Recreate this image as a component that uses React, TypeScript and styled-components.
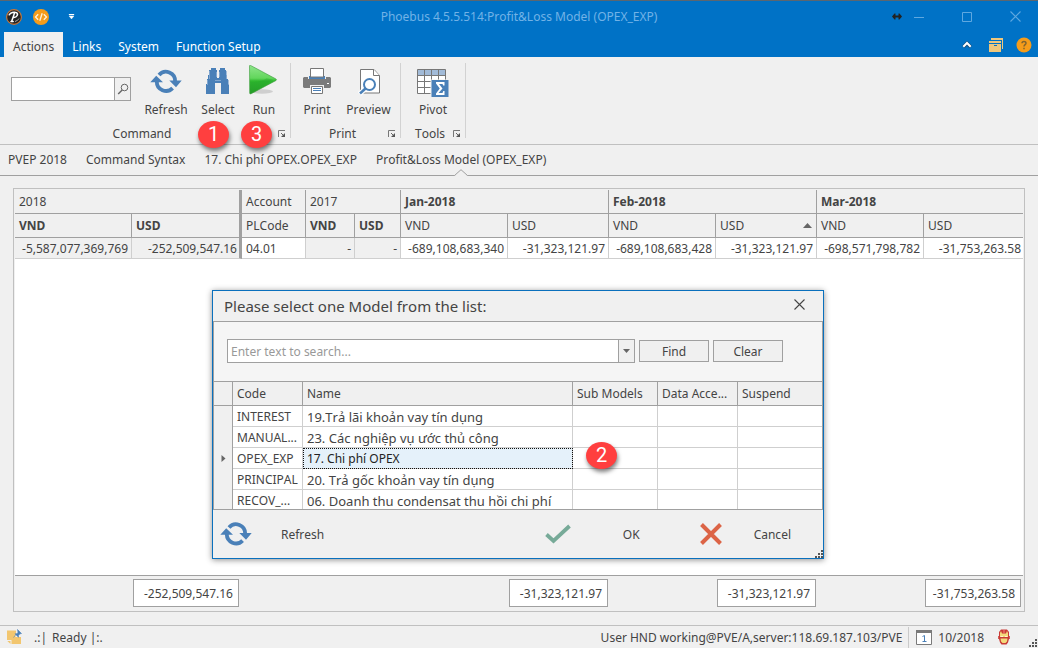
import React, { useState } from 'react';
import styled, { createGlobalStyle, css } from 'styled-components';

const blue = '#0072c6';
const surface = '#f0f0f0';
const line = '#a0a0a0';
const softLine = '#c0c0c0';
const cellLine = '#cfcfcf';
const ink = '#444444';
const steel = '#4a80b8';

const GlobalStyle = createGlobalStyle`
  *, *::before, *::after { box-sizing: border-box; }
  body {
    margin: 0;
    background: ${surface};
    color: ${ink};
    font: 12px/16px 'Noto Sans', 'Open Sans', sans-serif;
    font-kerning: none;
  }
  button, input { font: inherit; font-kerning: none; color: inherit; }
  button { margin: 0; padding: 0; border: 0; background: none; border-radius: 0; }
  svg { display: block; }
`;

const Window = styled.div`
  position: relative;
  display: flex;
  flex-direction: column;
  min-height: 100vh;
`;

/* ---------- title bar and ribbon tabs ---------- */

const TitleBar = styled.header`
  display: grid;
  grid-template-columns: 1fr auto 1fr;
  align-items: center;
  height: 32px;
  border-top: 1px solid #5c6670;
  background: ${blue};
`;

const QuickAccess = styled.div`
  display: flex;
  align-items: center;
  gap: 11px;
  padding-left: 6px;
`;

const Title = styled.h1`
  margin: 0;
  font-size: 12px;
  font-weight: 400;
  color: #72b2e6;
`;

const WindowControls = styled.div`
  display: flex;
  justify-content: flex-end;
  align-items: center;
  padding-right: 17px;
`;

const ControlButton = styled.button<{ $gap?: number }>`
  margin-left: ${(p) => p.$gap ?? 0}px;
`;

const TabBar = styled.nav`
  display: flex;
  align-items: stretch;
  gap: 1px;
  height: 25px;
  padding: 0 6px 0 4px;
  background: ${blue};
`;

const RibbonTab = styled.button<{ $active?: boolean }>`
  padding: 4px 8px 0;
  color: #fff;
  ${(p) => p.$active && css`
    padding: 4px 9px 0;
    background: ${surface};
    color: ${ink};
  `}
`;

const TabTools = styled.div`
  display: flex;
  align-items: center;
  gap: 13px;
  margin-left: auto;
  padding-top: 1px;
`;

const CollapseButton = styled.button`
  margin-right: 4px;
`;

/* ---------- ribbon ---------- */

const Ribbon = styled.section`
  display: flex;
  height: 88px;
  padding-top: 6px;
  border-bottom: 1px solid ${softLine};
`;

const Group = styled.div`
  display: flex;
  flex-direction: column;
`;

const GroupItems = styled.div`
  display: flex;
  align-items: flex-start;
  height: 63px;
`;

const GroupFooter = styled.div`
  display: flex;
  align-items: center;
  padding: 0 4px 0 6px;
`;

const GroupLabel = styled.span`
  flex: 1;
  text-align: center;
`;

const Separator = styled.div`
  width: 1px;
  height: 75px;
  background: #d2d2d2;
`;

const RibbonButton = styled.button<{ $width: number; $before?: number; $after?: number }>`
  display: flex;
  flex-direction: column;
  align-items: center;
  gap: 4px;
  width: ${(p) => p.$width}px;
  margin: 0 ${(p) => p.$after ?? 0}px 0 ${(p) => p.$before ?? 0}px;
  padding-top: 2px;
  white-space: nowrap;

  svg { height: 33px; }
`;

const CommandSearch = styled.div`
  display: flex;
  width: 120px;
  height: 24px;
  margin: 14px 9px 0 11px;
  border: 1px solid ${line};
  background: #fff;
`;

const BareInput = styled.input`
  flex: 1;
  min-width: 0;
  padding: 1px 3px 0;
  border: 0;
  outline: 0;
  background: transparent;

  &::placeholder { color: #999; opacity: 1; }
`;

const InputButton = styled.button`
  display: grid;
  place-items: center;
  width: 16px;
  border-left: 1px solid ${line};
  background: ${surface};
`;

/* ---------- document tabs ---------- */

const DocTabs = styled.nav`
  display: flex;
  gap: 19px;
  height: 31px;
  padding: 0 8px;
  border-bottom: 1px solid ${line};
`;

const DocTab = styled.button`
  position: relative;
  white-space: nowrap;
  padding-bottom: 1px;
`;

const Notch = styled.svg`
  position: absolute;
  left: 50%;
  bottom: -1px;
  margin-left: -7px;
`;

/* ---------- pivot grid ---------- */

const Workspace = styled.main`
  flex: 1;
  display: flex;
  padding: 12px 13px 13px;
`;

const PivotPanel = styled.div`
  flex: 1;
  min-width: 0;
  display: flex;
  flex-direction: column;
  padding: 1px 1px 0;
  border: 1px solid ${softLine};
`;

const PivotTable = styled.table`
  width: 100%;
  table-layout: fixed;
  border-collapse: separate;
  border-spacing: 0;
  background: #fff;
`;

const HeadCell = styled.th<{ $bold?: boolean; $thick?: boolean; $last?: boolean }>`
  height: 24px;
  padding: 0 4px;
  border-bottom: 1px solid ${line};
  border-right: ${(p) => (p.$last ? 0 : p.$thick ? 3 : 1)}px solid ${line};
  background: ${surface};
  font-weight: ${(p) => (p.$bold ? 700 : 400)};
  text-align: left;
  white-space: nowrap;
`;

const HeadContent = styled.span`
  display: flex;
  align-items: center;
  justify-content: space-between;
`;

const DataCell = styled.td<{ $frozen?: boolean; $thick?: boolean; $left?: boolean; $last?: boolean }>`
  height: 21px;
  padding: 2px ${(p) => (p.$thick || p.$last ? 2 : 3)}px 0 4px;
  border-bottom: 1px solid ${cellLine};
  border-right: ${(p) => (p.$last ? '0' : p.$thick ? `3px solid ${line}` : `1px solid ${cellLine}`)};
  background: ${(p) => (p.$frozen ? surface : '#fff')};
  text-align: ${(p) => (p.$left ? 'left' : 'right')};
  white-space: nowrap;
`;

const PivotBody = styled.div`
  flex: 1;
  min-height: 240px;
  background: #fff;
`;

const Totals = styled.div`
  display: grid;
  grid-template-columns: 117px 107px 269px 100px 108px 100px 108px 1fr;
  height: 36px;
  padding-top: 3px;
  border-top: 1px solid ${line};
`;

const Total = styled.output<{ $column: number; $inset?: boolean }>`
  grid-column: ${(p) => p.$column};
  height: 28px;
  margin: 0 ${(p) => (p.$inset ? 2 : 0)}px 0 1px;
  padding: 6px 5px 0 0;
  border: 1px solid ${line};
  background: #fff;
  text-align: right;
`;

/* ---------- status bar ---------- */

const StatusBar = styled.footer`
  display: flex;
  align-items: center;
  height: 23px;
  padding-left: 7px;
  border-top: 1px solid ${softLine};
`;

const StatusText = styled.span<{ $gap?: number }>`
  margin-left: ${(p) => p.$gap ?? 0}px;
  padding-top: 2px;
  white-space: pre;
`;

const StatusEnd = styled.div`
  display: flex;
  align-items: center;
  gap: 6px;
  margin-left: auto;
`;

const StatusSeparator = styled.div`
  width: 1px;
  height: 21px;
  margin-right: 1px;
  background: #cacaca;
`;

const StatusButton = styled.button`
  margin-left: 14px;
`;

const GripCorner = styled.div`
  align-self: flex-end;
  padding: 0 1px 1px 19px;
`;

/* ---------- dialog ---------- */

const Dialog = styled.section`
  position: absolute;
  top: 290px;
  left: calc(50% - 307px);
  width: 612px;
  border: 1px solid #0a70bd;
  background: ${surface};
  box-shadow: 0 1px 6px rgba(0, 0, 0, 0.45);
`;

const DialogHeader = styled.div`
  display: flex;
  align-items: center;
  justify-content: space-between;
  height: 30px;
  padding: 0 18px 0 11px;
`;

const DialogTitle = styled.h2`
  margin: 0;
  font-size: 15px;
  line-height: 20px;
  font-weight: 400;
`;

const DialogClose = styled.button`
  margin-bottom: 3px;
`;

const DialogBody = styled.div`
  border: 1px solid ${line};
`;

const SearchRow = styled.div`
  display: flex;
  align-items: center;
  gap: 4px;
  height: 59px;
  padding: 0 39px 1px 13px;
  background: #f5f5f5;
`;

const SearchBox = styled.div`
  display: flex;
  flex: 1;
  height: 24px;
  border: 1px solid ${line};
  background: #fff;
`;

const PushButton = styled.button`
  width: 70px;
  height: 22px;
  padding-top: 1px;
  border: 1px solid ${line};
  background: ${surface};
`;

const ListClip = styled.div`
  height: 128px;
  overflow: hidden;
  border-top: 1px solid ${line};
`;

const ListTable = styled.table`
  width: 100%;
  table-layout: fixed;
  border-collapse: separate;
  border-spacing: 0;
  background: #fff;
`;

const ListHead = styled.th`
  height: 24px;
  padding: 0 4px;
  border-bottom: 1px solid ${line};
  border-right: 1px solid ${line};
  background: ${surface};
  font-weight: 400;
  text-align: left;
  white-space: nowrap;
  overflow: hidden;

  &:last-child { border-right: 0; }
`;

const ListCell = styled.td<{ $name?: boolean; $selected?: boolean }>`
  height: 21px;
  padding: 2px 0 0 4px;
  border-bottom: 1px solid ${cellLine};
  border-right: 1px solid ${cellLine};
  white-space: nowrap;
  overflow: hidden;
  ${(p) => p.$name && css`font-size: 13px;`}
  ${(p) => p.$selected && css`
    background: #e5f1fa;
    color: #222;
    font-size: 12px;
    outline: 1px dotted #111;
    outline-offset: -1px;
  `}

  &:last-child { border-right: 0; }
`;

const Indicator = styled.td`
  padding-left: 7px;
  border-right: 1px solid ${line};
  background: ${surface};
`;

const DialogFooter = styled.div`
  display: flex;
  align-items: center;
  height: 48px;
  padding: 0 32px 0 7px;
`;

const DialogAction = styled.button<{ $gap: number; $before?: string }>`
  display: flex;
  align-items: center;
  gap: ${(p) => p.$gap}px;
  margin-left: ${(p) => p.$before ?? 0};
`;

const ActionLabel = styled.span`
  padding-top: 1px;
`;

const DialogGrip = styled.div`
  position: absolute;
  right: 0;
  bottom: 0;
`;

/* ---------- numbered step markers ---------- */

const Step = styled.span<{ $x: string; $y: number }>`
  position: absolute;
  left: ${(p) => p.$x};
  top: ${(p) => p.$y}px;
  width: 31px;
  height: 27px;
  border-radius: 50%;
  background: #ff3f3f;
  box-shadow: 1px 3px 4px rgba(0, 0, 0, 0.5);
  color: #fff;
  font: 20px/27px Roboto, sans-serif;
  text-align: center;
`;

/* ---------- icons ---------- */

const LogoIcon = () => (
  <svg width="16" height="16" viewBox="0 0 16 16">
    <circle cx="8" cy="8" r="7.4" fill="#252525" stroke="#c8783c" strokeWidth="1.1" />
    <path d="M3.2 5.8C4.5 3.5 8 2.6 10.4 3.6C12.6 5 11.2 8.3 7.6 8.6M8.6 3.8L5.6 12.6M5 12.6h2.2" fill="none" stroke="#fff" strokeWidth="1.5" strokeLinecap="round" />
    <path d="M9 12.5q3-.8 4-3" fill="none" stroke="#aaa" strokeWidth="1" />
  </svg>
);

const CodeIcon = () => (
  <svg width="16" height="16" viewBox="0 0 16 16">
    <circle cx="8" cy="8" r="8" fill="#f59c1a" />
    <path d="M5.2 5.2L2.5 8l2.7 2.8M10.8 5.2L13.5 8l-2.7 2.8M9.2 4.2L6.8 11.8" fill="none" stroke="#fff3dc" strokeWidth="1.3" />
  </svg>
);

const QuickMenuIcon = () => (
  <svg width="7" height="6" viewBox="0 0 7 6">
    <path d="M1 0h5v1H1zM1 2h5L3.5 5z" fill="#fff" stroke="#fff" strokeWidth=".3" />
  </svg>
);

const ResizeIcon = () => (
  <svg width="10" height="7" viewBox="0 0 10 7">
    <path d="M0 3.5L2.5.5h1v2h3v-2h1L10 3.5 7.500 6.500h-1v-2h-3v2h-1z" fill="#222" />
  </svg>
);

const MinimizeIcon = () => (
  <svg width="10" height="10" viewBox="0 0 10 10"><path d="M0 5.5h10" stroke="#5fa8e0" /></svg>
);

const MaximizeIcon = () => (
  <svg width="10" height="10" viewBox="0 0 10 10"><path d="M.5.5h9v9h-9z" fill="none" stroke="#5fa8e0" /></svg>
);

const CloseIcon = ({ color }: { color: string }) => (
  <svg width="11" height="11" viewBox="0 0 11 11"><path d="M.5.5l10 10M10.5.5l-10 10" stroke={color} strokeWidth="1.1" /></svg>
);

const CollapseIcon = () => (
  <svg width="10" height="8" viewBox="0 0 10 8">
    <path d="M1.3 6L5 2.3 8.7 6" fill="none" stroke="#174d79" strokeWidth="3.6" />
    <path d="M1.3 5.7L5 2 8.7 5.7" fill="none" stroke="#fff" strokeWidth="2" />
  </svg>
);

const ArchiveIcon = () => (
  <svg width="14" height="14" viewBox="0 0 14 14">
    <path d="M2 0h12v11h-1V2H2zM0 3h12v2H0zM0 6h12v8H0z" fill="#efc77c" />
    <path d="M5 7.5h3" stroke={blue} />
  </svg>
);

const HelpIcon = () => (
  <svg width="16" height="16" viewBox="0 0 16 16">
    <circle cx="8" cy="8" r="7.5" fill="#f59c1a" />
    <path d="M6 6.3C6 3.7 10 3.8 10 6.2C10 7.7 8 7.6 8 9.6M8 10.8v1.5" fill="none" stroke="#80642f" strokeWidth="1.5" />
  </svg>
);

const MagnifierIcon = () => (
  <svg width="12" height="12" viewBox="0 0 12 12">
    <circle cx="7.5" cy="4.5" r="3.3" fill="none" stroke="#666" />
    <path d="M5.2 6.9L1.2 10.9" stroke="#666" strokeWidth="1.4" />
  </svg>
);

const RefreshIcon = () => (
  <svg width="32" height="24" viewBox="0 0 32 24">
    <g fill="none" stroke={steel} strokeWidth="3.8">
      <path d="M9 5.4A9.2 9.2 0 0 1 25.1 12" />
      <path d="M6.8 12A9.2 9.2 0 0 0 22.6 18.6" />
    </g>
    <path d="M.3 12.8L6.2 6.2L13 12.8zM19.3 11L31.7 11L26 17.7z" fill={steel} />
  </svg>
);

const BinocularsIcon = () => (
  <svg width="26" height="33" viewBox="0 0 26 33">
    <path d="M6 3h5v2h1v8h2V5h1V3h5v2h1v5h1v4h1v5h1v10H16V18h-6v11H1V19h1v-5h1v-4h1V5h2z" fill={steel} />
    <path d="M4.5 6v8M21.5 6v8M2.5 15v5M23.5 15v5M11.5 7v5M14.5 7v5M10 15.5h6" stroke="#8fb0d4" strokeWidth=".8" />
    <path d="M12.5 3v10h1V3z" fill={surface} />
  </svg>
);

const RunIcon = () => (
  <svg width="32" height="33" viewBox="0 0 32 33">
    <defs>
      <linearGradient id="runFill" x1="0" y1="0" x2="0" y2="1">
        <stop offset="0" stopColor="#8fe58a" />
        <stop offset=".45" stopColor="#62d65c" />
        <stop offset=".55" stopColor="#2fb82e" />
        <stop offset="1" stopColor="#259b28" />
      </linearGradient>
    </defs>
    <ellipse cx="14" cy="26.5" rx="11" ry="2.2" fill="#cfcfcf" />
    <path d="M1.5 1q0-1.2 1-.6L28 14q1 .8 0 1.5L3 28.8q-1.3.6-1.3-.8z" fill="url(#runFill)" stroke="#3a9a3a" strokeWidth=".6" />
    <path d="M2.5 17q9 .8 16-3.8l6.5 1.6L3.1 27z" fill="#25a62a" opacity=".35" />
  </svg>
);

const PrinterIcon = () => (
  <svg width="28" height="33" viewBox="0 0 28 33">
    <path d="M1 12h26l1 1v9l-1 1H1l-1-1v-9z" fill="#7b7b7b" />
    <path d="M5 11h18v3H5z" fill={surface} />
    <path d="M6 11h16v3H6z" fill={steel} />
    <path d="M7.5 3.5h13v8.5h-13z" fill="#fff" stroke="#777" />
    <path d="M7 20h14v9H7z" fill={surface} />
    <path d="M8.5 21.5h11v7h-11z" fill="#fff" stroke="#777" />
    <path d="M10 23.5h8M10 25.5h8" stroke={steel} />
    <path d="M24 18.5h2" stroke="#fff" />
  </svg>
);

const PreviewIcon = () => (
  <svg width="24" height="33" viewBox="0 0 24 33">
    <path d="M3.5 4.5H17l5.5 6v17.5h-19z" fill="#fff" stroke="#777" />
    <path d="M16.5 4.5v6h6" fill="#fff" stroke="#777" />
    <circle cx="12.5" cy="19.5" r="7" fill="#fff" />
    <path d="M8.5 23.5L2.5 29" stroke="#fff" strokeWidth="5" />
    <circle cx="12.5" cy="19.5" r="5.5" fill="#fff" stroke={steel} strokeWidth="2" />
    <path d="M8.5 23.5L3 28.5" stroke={steel} strokeWidth="2.5" />
  </svg>
);

const PivotIcon = () => (
  <svg width="32" height="33" viewBox="0 0 32 33">
    <path d="M.5 4.5h28v24H.5z" fill="#fff" />
    <path d="M.5 4.5h28v6H.5z" fill="#a2bbd8" />
    <path d="M.5 4.5h28v24H.5zM7.5 4.5v24M14.5 4.5v24M21.5 4.5v24M.5 10.5h28M.5 16.5h28M.5 22.5h28" fill="none" stroke="#777" />
    <path d="M13.5 14.5H32V33H13.5z" fill={surface} />
    <path d="M14.5 15H31.5V32H14.5z" fill={steel} />
    <path d="M19 17h8.5v3.5h-1.3l-.7-1.5h-3.5l3.5 4.5-4 4.5h4l.8-2h1.2v4H19v-1.6l3.8-4.9L19 18.6z" fill="#fff" />
  </svg>
);

const LauncherIcon = () => (
  <svg width="8" height="8" viewBox="0 0 8 8">
    <path d="M.5 7V.5H7" fill="none" stroke="#777" />
    <path d="M3 3l3 3" stroke="#666" />
    <path d="M7 3v4H3z" fill="#555" />
  </svg>
);

const DownIcon = () => (
  <svg width="7" height="4" viewBox="0 0 7 4"><path d="M0 0h7L3.5 4z" fill="#666" /></svg>
);

const SortIcon = () => (
  <svg width="9" height="5" viewBox="0 0 9 5"><path d="M0 5h9L4.5 0z" fill="#666" /></svg>
);

const RowArrowIcon = () => (
  <svg width="5" height="7" viewBox="0 0 5 7"><path d="M.5 0v7L4.5 3.5z" fill="#666" /></svg>
);

const CheckIcon = () => (
  <svg width="28" height="22" viewBox="0 0 28 22">
    <path d="M2.5 11.5L9.5 18L25.5 3" fill="none" stroke="#77aa98" strokeWidth="3.8" />
  </svg>
);

const CrossIcon = () => (
  <svg width="22" height="22" viewBox="0 0 22 22">
    <path d="M1.5 1.5L20.5 20.5M20.5 1.5L1.5 20.5" stroke="#dc6446" strokeWidth="4" />
  </svg>
);

const GripIcon = () => (
  <svg width="8" height="8" viewBox="0 0 8 8">
    <path d="M6 0h2v2H6zM3 3h2v2H3zM6 3h2v2H6zM0 6h2v2H0zM3 6h2v2H3zM6 6h2v2H6z" fill="#555" />
  </svg>
);

const NoteIcon = () => (
  <svg width="15" height="16" viewBox="0 0 15 16">
    <path d="M0 1.5h9v4l-1 1.5 1 1h5V15H4.5v-4H0z" fill="#f2c66f" />
    <path d="M.3 12h3.2v3z" fill="#f2c66f" />
    <path d="M10.5 .5l4 4-1.5.3-1.5 1.5v2l-3.5-3.5h2l1-1.5zM9 5.5L6.5 8.5" fill={steel} stroke={steel} strokeWidth=".6" />
  </svg>
);

const CalendarIcon = () => (
  <svg width="16" height="15" viewBox="0 0 16 15">
    <path d="M.5.5h15v14H.5z" fill="#fff" stroke="#7a7a7a" />
    <path d="M0 0h16v3H0z" fill="#7a7a7a" />
    <path d="M6.5 6.5L8.5 5.5V11.5M6.5 11.5h4" fill="none" stroke={steel} />
  </svg>
);

const MaskIcon = () => (
  <svg width="12" height="16" viewBox="0 0 12 16">
    <path d="M3 .5h6L11 3v4h.8v3H11l-1 3.5L8.5 15.5h-5L2 13.5 1 10H.2V7H1V3z" fill="#c93b36" />
    <path d="M3 2l1 2.5h4L9 2l1 2v4H2V4zM2.5 9.5h7l-.5 3-1.5 1.5h-3L3 12.5z" fill="#f3da7c" />
    <path d="M2.5 7.5h2.5M7 7.5h2.5" stroke="#fff7d0" />
    <path d="M5 1h2v3H5z" fill="#e0605a" />
  </svg>
);

/* ---------- data ---------- */

const pivotColumns = [117, 110, 64, 49, 46, 107, 101, 107, 101, 107];

const docTabs = ['PVEP 2018', 'Command Syntax', '17. Chi phí OPEX.OPEX_EXP', 'Profit&Loss Model (OPEX_EXP)'];

const months = ['Jan-2018', 'Feb-2018', 'Mar-2018'];

const monthValues = [
  '-689,108,683,340', '-31,323,121.97',
  '-689,108,683,428', '-31,323,121.97',
  '-698,571,798,782', '-31,753,263.58',
];

const models = [
  { code: 'INTEREST', name: '19.Trả lãi khoản vay tín dụng' },
  { code: 'MANUAL...', name: '23. Các nghiệp vụ ước thủ công' },
  { code: 'OPEX_EXP', name: '17. Chi phí OPEX' },
  { code: 'PRINCIPAL', name: '20. Trả gốc khoản vay tín dụng' },
  { code: 'RECOV_...', name: '06. Doanh thu condensat thu hồi chi phí' },
];

/* ---------- sections ---------- */

const RibbonBar = () => (
  <Ribbon>
    <Group>
      <GroupItems>
        <CommandSearch>
          <BareInput aria-label="Search commands" />
          <InputButton aria-label="Search"><MagnifierIcon /></InputButton>
        </CommandSearch>
        <RibbonButton $width={52}><RefreshIcon />Refresh</RibbonButton>
        <RibbonButton $width={52}><BinocularsIcon />Select</RibbonButton>
        <RibbonButton $width={40} $after={6}><RunIcon />Run</RibbonButton>
      </GroupItems>
      <GroupFooter>
        <GroupLabel>Command</GroupLabel>
        <button aria-label="Command options"><LauncherIcon /></button>
      </GroupFooter>
    </Group>
    <Separator />
    <Group>
      <GroupItems>
        <RibbonButton $width={40} $before={6}><PrinterIcon />Print</RibbonButton>
        <RibbonButton $width={63}><PreviewIcon />Preview</RibbonButton>
      </GroupItems>
      <GroupFooter>
        <GroupLabel>Print</GroupLabel>
        <button aria-label="Print options"><LauncherIcon /></button>
      </GroupFooter>
    </Group>
    <Separator />
    <Group>
      <GroupItems>
        <RibbonButton $width={64}><PivotIcon />Pivot</RibbonButton>
      </GroupItems>
      <GroupFooter>
        <GroupLabel>Tools</GroupLabel>
        <button aria-label="Tools options"><LauncherIcon /></button>
      </GroupFooter>
    </Group>
    <Separator />
  </Ribbon>
);

const PivotGrid = () => (
  <PivotPanel>
    <PivotTable>
      <colgroup>
        {pivotColumns.map((width, i) => <col key={i} width={width} />)}
        <col />
      </colgroup>
      <thead>
        <tr>
          <HeadCell colSpan={2} $thick>2018</HeadCell>
          <HeadCell>Account</HeadCell>
          <HeadCell colSpan={2}>2017</HeadCell>
          {months.map((month, i) => (
            <HeadCell key={month} colSpan={2} $bold $last={i === 2}>{month}</HeadCell>
          ))}
        </tr>
        <tr>
          <HeadCell $bold>VND</HeadCell>
          <HeadCell $bold $thick>USD</HeadCell>
          <HeadCell>PLCode</HeadCell>
          <HeadCell $bold>VND</HeadCell>
          <HeadCell $bold>USD</HeadCell>
          {months.map((month, i) => (
            <React.Fragment key={month}>
              <HeadCell>VND</HeadCell>
              <HeadCell $last={i === 2}>
                <HeadContent>USD{i === 1 && <SortIcon />}</HeadContent>
              </HeadCell>
            </React.Fragment>
          ))}
        </tr>
      </thead>
      <tbody>
        <tr>
          <DataCell $frozen>-5,587,077,369,769</DataCell>
          <DataCell $frozen $thick>-252,509,547.16</DataCell>
          <DataCell $left>04.01</DataCell>
          <DataCell $frozen>-</DataCell>
          <DataCell $frozen>-</DataCell>
          {monthValues.map((value, i) => (
            <DataCell key={i} $last={i === 5}>{value}</DataCell>
          ))}
        </tr>
      </tbody>
    </PivotTable>
    <PivotBody />
    <Totals>
      <Total $column={2}>-252,509,547.16</Total>
      <Total $column={4}>-31,323,121.97</Total>
      <Total $column={6}>-31,323,121.97</Total>
      <Total $column={8} $inset>-31,753,263.58</Total>
    </Totals>
  </PivotPanel>
);

const ModelDialog = () => {
  const [query, setQuery] = useState('');
  return (
    <Dialog role="dialog" aria-labelledby="model-dialog-title">
      <DialogHeader>
        <DialogTitle id="model-dialog-title">Please select one Model from the list:</DialogTitle>
        <DialogClose aria-label="Close dialog"><CloseIcon color="#444" /></DialogClose>
      </DialogHeader>
      <DialogBody>
        <SearchRow>
          <SearchBox>
            <BareInput
              aria-label="Search models"
              placeholder="Enter text to search..."
              value={query}
              onChange={(e) => setQuery(e.target.value)}
            />
            <InputButton aria-label="Recent searches"><DownIcon /></InputButton>
          </SearchBox>
          <PushButton>Find</PushButton>
          <PushButton onClick={() => setQuery('')}>Clear</PushButton>
        </SearchRow>
        <ListClip>
          <ListTable>
            <colgroup>
              <col width={19} /><col width={70} /><col width={270} />
              <col width={85} /><col width={80} /><col />
            </colgroup>
            <thead>
              <tr>
                <ListHead />
                <ListHead>Code</ListHead>
                <ListHead>Name</ListHead>
                <ListHead>Sub Models</ListHead>
                <ListHead>Data Acce...</ListHead>
                <ListHead>Suspend</ListHead>
              </tr>
            </thead>
            <tbody>
              {models.map(({ code, name }) => {
                const selected = code === 'OPEX_EXP';
                return (
                  <tr key={code}>
                    <Indicator>{selected && <RowArrowIcon />}</Indicator>
                    <ListCell>{code}</ListCell>
                    <ListCell $name $selected={selected}>{name}</ListCell>
                    <ListCell />
                    <ListCell />
                    <ListCell />
                  </tr>
                );
              })}
            </tbody>
          </ListTable>
        </ListClip>
      </DialogBody>
      <DialogFooter>
        <DialogAction $gap={29}><RefreshIcon /><ActionLabel>Refresh</ActionLabel></DialogAction>
        <DialogAction $gap={51} $before="auto"><CheckIcon /><ActionLabel>OK</ActionLabel></DialogAction>
        <DialogAction $gap={32} $before="60px"><CrossIcon /><ActionLabel>Cancel</ActionLabel></DialogAction>
      </DialogFooter>
      <DialogGrip><GripIcon /></DialogGrip>
    </Dialog>
  );
};

export default function App() {
  return (
    <Window>
      <GlobalStyle />
      <TitleBar>
        <QuickAccess>
          <LogoIcon />
          <button aria-label="Code"><CodeIcon /></button>
          <ControlButton $gap={8} aria-label="Customize quick access"><QuickMenuIcon /></ControlButton>
        </QuickAccess>
        <Title>Phoebus 4.5.5.514:Profit&amp;Loss Model (OPEX_EXP)</Title>
        <WindowControls>
          <ControlButton aria-label="Resize"><ResizeIcon /></ControlButton>
          <ControlButton $gap={12} aria-label="Minimize"><MinimizeIcon /></ControlButton>
          <ControlButton $gap={38} aria-label="Maximize"><MaximizeIcon /></ControlButton>
          <ControlButton $gap={38} aria-label="Close"><CloseIcon color="#5fa8e0" /></ControlButton>
        </WindowControls>
      </TitleBar>
      <TabBar>
        <RibbonTab $active>Actions</RibbonTab>
        <RibbonTab>Links</RibbonTab>
        <RibbonTab>System</RibbonTab>
        <RibbonTab>Function Setup</RibbonTab>
        <TabTools>
          <CollapseButton aria-label="Collapse ribbon"><CollapseIcon /></CollapseButton>
          <button aria-label="Windows"><ArchiveIcon /></button>
          <button aria-label="Help"><HelpIcon /></button>
        </TabTools>
      </TabBar>
      <RibbonBar />
      <DocTabs>
        {docTabs.map((label, i) => (
          <DocTab key={label}>
            {label}
            {i === docTabs.length - 1 && (
              <Notch width="14" height="7" viewBox="0 0 14 7">
                <path d="M0 7L1 6.5L7 .7L13 6.5L14 7z" fill={surface} />
                <path d="M.5 6.5L7 .7L13.5 6.5" fill="none" stroke={line} />
              </Notch>
            )}
          </DocTab>
        ))}
      </DocTabs>
      <Workspace>
        <PivotGrid />
      </Workspace>
      <StatusBar>
        <NoteIcon />
        <StatusText $gap={12}>.:|</StatusText>
        <StatusText $gap={5}>Ready |:.</StatusText>
        <StatusEnd>
          <StatusText>User HND working@PVE/A,server:118.69.187.103/PVE</StatusText>
          <StatusSeparator />
          <CalendarIcon />
          <StatusText>10/2018</StatusText>
        </StatusEnd>
        <StatusButton aria-label="User profile"><MaskIcon /></StatusButton>
        <GripCorner><GripIcon /></GripCorner>
      </StatusBar>
      <ModelDialog />
      <Step $x="198px" $y={121}>1</Step>
      <Step $x="241px" $y={121}>3</Step>
      <Step $x="calc(50% + 67px)" $y={442}>2</Step>
    </Window>
  );
}
